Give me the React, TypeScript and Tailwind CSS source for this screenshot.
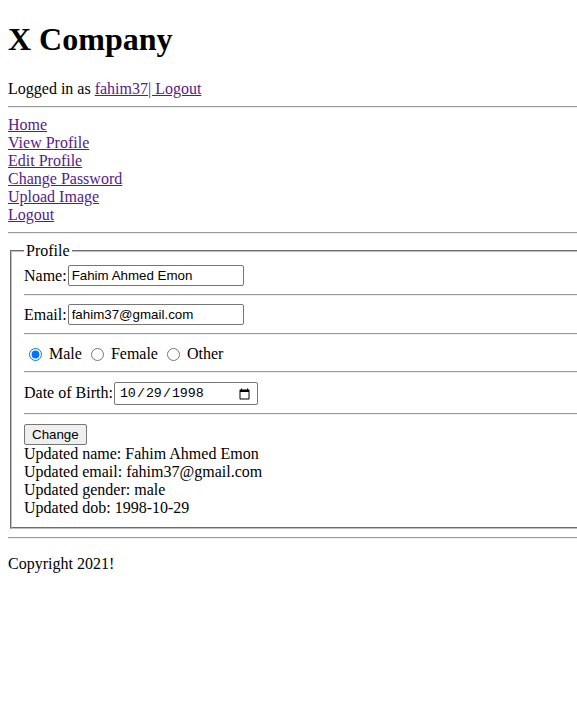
import { useState } from "react"

const serif = "font-['Liberation_Serif','Times_New_Roman',serif]"
const sans = "font-['Liberation_Sans',Arial,sans-serif]"

function Rule() {
  return <hr className="my-2 h-0 border-t border-b border-t-[#9a9a9a] border-b-[#eeeeee]" />
}

export default function App() {
  const [gender, setGender] = useState("male")

  const links = ["Home", "View Profile", "Edit Profile", "Change Password", "Upload Image", "Logout"]

  return (
    <div className={`w-[577px] h-[713px] overflow-hidden bg-white text-black text-[16px] leading-[18px] ${serif}`}>
      <div className="w-[610px] px-2">
        <h1 className="mt-[21.44px] mb-[21.44px] text-[32px] leading-[37px] font-bold">X Company</h1>

        <div>
          Logged in as <a href="#" className="text-[#551a8b] underline">fahim37| Logout</a>
        </div>

        <Rule />

        <nav className="flex flex-col">
          {links.map(l => (
            <a key={l} href="#" className="text-[#551a8b] underline self-start">{l}</a>
          ))}
        </nav>

        <Rule />

        <fieldset className="mx-[2px] pt-[5.6px] pb-[10px] px-3 border-2 [border-style:groove] border-[#c0c0c0]">
          <legend className="px-[2px] leading-[18px]">Profile</legend>

          <div className="flex items-center h-[21px]">
            <span>Name:</span>
            <input
              type="text"
              defaultValue="Fahim Ahmed Emon"
              className={`ml-[1px] w-[176px] h-[21px] border border-[#767676] rounded-[2px] pl-[3px] text-[13.33px] ${sans}`}
            />
          </div>

          <Rule />

          <div className="flex items-center h-[21px]">
            <span>Email:</span>
            <input
              type="text"
              defaultValue="fahim37@gmail.com"
              className={`ml-[1px] w-[176px] h-[21px] border border-[#767676] rounded-[2px] pl-[3px] text-[13.33px] ${sans}`}
            />
          </div>

          <Rule />

          <div className="flex items-center h-[20px] pt-[2px]">
            {[
              ["male", "Male"],
              ["female", "Female"],
              ["other", "Other"]
            ].map(([v, label]) => (
              <label key={v} className="flex items-center">
                <input
                  type="radio"
                  name="gender"
                  checked={gender === v}
                  onChange={() => setGender(v)}
                  className="ml-[5px] mr-[7px] w-[13px] h-[13px] accent-[#0075ff]"
                />
                <span className="mr-[4px]">{label}</span>
              </label>
            ))}
          </div>

          <Rule />

          <div className="flex items-center h-[24px]">
            <span>Date of Birth:</span>
            <input
              type="date"
              defaultValue="1998-10-29"
              className="ml-[1px] w-[144px] h-[23px] border border-[#767676] rounded-[2px] px-[4px] pt-[2px] text-[13.33px] font-['Liberation_Mono',monospace]"
            />
          </div>

          <Rule />

          <div className="h-[22px] pt-[1px]">
            <button className={`h-[21px] px-[7px] bg-[#efefef] border border-[#767676] rounded-[2px] text-[13.33px] ${sans}`}>
              Change
            </button>
          </div>

          <div>Updated name: Fahim Ahmed Emon</div>
          <div>Updated email: fahim37@gmail.com</div>
          <div>Updated gender: {gender}</div>
          <div>Updated dob: 1998-10-29</div>
        </fieldset>

        <Rule />

        <p className="mt-4">Copyright 2021!</p>
      </div>
    </div>
  )
}
